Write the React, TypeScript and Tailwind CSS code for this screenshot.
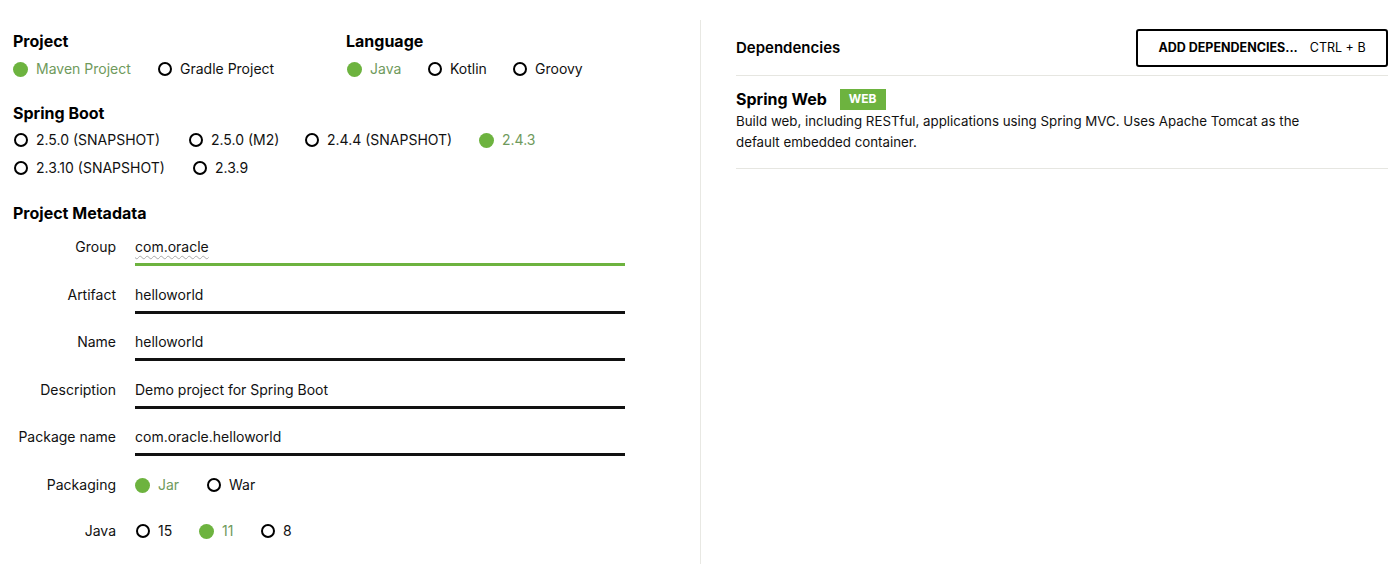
import React from "react";

function Radio({ label, checked, w }: { label: string; checked?: boolean; w?: string }) {
  return (
    <div className={`flex items-center gap-[8px] ${w ?? ""}`}>
      <span className="flex w-[15px] h-[15px] items-center justify-center shrink-0">
        {checked ? (
          <span className="block w-[15px] h-[15px] rounded-full bg-[#6db33f]" />
        ) : (
          <span className="block w-[14px] h-[14px] rounded-full border-2 border-black" />
        )}
      </span>
      <span className={`text-[14px] leading-[24px] whitespace-nowrap ${checked ? "text-[#6f9a5c]" : "text-[#111]"}`}>
        {label}
      </span>
    </div>
  );
}

function Field({ label, value, focused, spell }: { label: string; value: string; focused?: boolean; spell?: boolean }) {
  return (
    <div className="flex items-start">
      <div className="w-[103px] text-right text-[14px] leading-[24px] text-[#111] whitespace-nowrap">{label}</div>
      <div className={`ml-[19px] w-[490px] pb-[4px] border-b-[3px] ${focused ? "border-[#6db33f]" : "border-[#111]"}`}>
        <span className="block text-[14px] leading-[24px] text-[#111]">
          {spell ? (
            <span className="underline decoration-wavy decoration-[#aaaaaa] decoration-1 underline-offset-[3px]">{value}</span>
          ) : (
            value
          )}
        </span>
      </div>
    </div>
  );
}

export default function App() {
  return (
    <div
      className="w-[1400px] h-[564px] bg-white flex pt-[20px] overflow-hidden"
      style={{ fontFamily: "Inter, 'Open Sans', sans-serif" }}
    >
      {/* Left column */}
      <div className="w-[701px] shrink-0 border-r border-[#e8e8e3] pl-[13px] pt-[9px]">
        <div className="flex">
          <div className="w-[333px]">
            <div className="text-[16px] leading-[24px] font-bold text-black">Project</div>
            <div className="flex mt-[4px]">
              <Radio label="Maven Project" checked w="w-[144px]" />
              <Radio label="Gradle Project" />
            </div>
          </div>
          <div>
            <div className="text-[16px] leading-[24px] font-bold text-black">Language</div>
            <div className="flex mt-[4px] pl-[1px]">
              <Radio label="Java" checked w="w-[80px]" />
              <Radio label="Kotlin" w="w-[85px]" />
              <Radio label="Groovy" />
            </div>
          </div>
        </div>

        <div className="mt-[20px] text-[16px] leading-[24px] font-bold text-black">Spring Boot</div>
        <div className="flex mt-[3px]">
          <Radio label="2.5.0 (SNAPSHOT)" w="w-[175px]" />
          <Radio label="2.5.0 (M2)" w="w-[116px]" />
          <Radio label="2.4.4 (SNAPSHOT)" w="w-[175px]" />
          <Radio label="2.4.3" checked />
        </div>
        <div className="flex mt-[4px]">
          <Radio label="2.3.10 (SNAPSHOT)" w="w-[179px]" />
          <Radio label="2.3.9" />
        </div>

        <div className="mt-[21px] text-[16px] leading-[24px] font-bold text-black">Project Metadata</div>
        <div className="mt-[10px] flex flex-col gap-[16.5px]">
          <Field label="Group" value="com.oracle" focused spell />
          <Field label="Artifact" value="helloworld" />
          <Field label="Name" value="helloworld" />
          <Field label="Description" value="Demo project for Spring Boot" />
          <Field label="Package name" value="com.oracle.helloworld" />
        </div>

        <div className="flex items-center mt-[17px]">
          <div className="w-[103px] text-right text-[14px] leading-[24px] text-[#111]">Packaging</div>
          <div className="ml-[19px] flex">
            <Radio label="Jar" checked w="w-[71px]" />
            <Radio label="War" />
          </div>
        </div>
        <div className="flex items-center mt-[22px]">
          <div className="w-[103px] text-right text-[14px] leading-[24px] text-[#111]">Java</div>
          <div className="ml-[19px] flex">
            <Radio label="15" w="w-[64px]" />
            <Radio label="11" checked w="w-[61px]" />
            <Radio label="8" />
          </div>
        </div>
      </div>

      {/* Right column */}
      <div className="flex-1 pl-[35px] pr-[12px] pt-[9px]">
        <div className="flex items-center justify-between pb-[8px] border-b border-[#e6e6e1]">
          <div className="text-[15px] leading-[24px] font-semibold text-black">Dependencies</div>
          <div className="h-[38px] w-[252px] border-2 border-black rounded-[3px] flex items-center justify-center gap-[12px] text-[12.5px] text-black">
            <span className="font-bold">ADD DEPENDENCIES...</span>
            <span>CTRL + B</span>
          </div>
        </div>
        <div className="pt-[11px] pb-[15px] border-b border-[#e6e6e1]">
          <div className="flex items-center gap-[13px]">
            <span className="text-[16px] leading-[24px] font-bold text-black">Spring Web</span>
            <span className="h-[21px] px-[9px] bg-[#6db33f] text-white text-[12px] font-bold flex items-center">WEB</span>
          </div>
          <div className="text-[13.3px] leading-[21px] text-[#111] max-w-[580px]">
            Build web, including RESTful, applications using Spring MVC. Uses Apache Tomcat as the default embedded
            container.
          </div>
        </div>
      </div>
    </div>
  );
}
